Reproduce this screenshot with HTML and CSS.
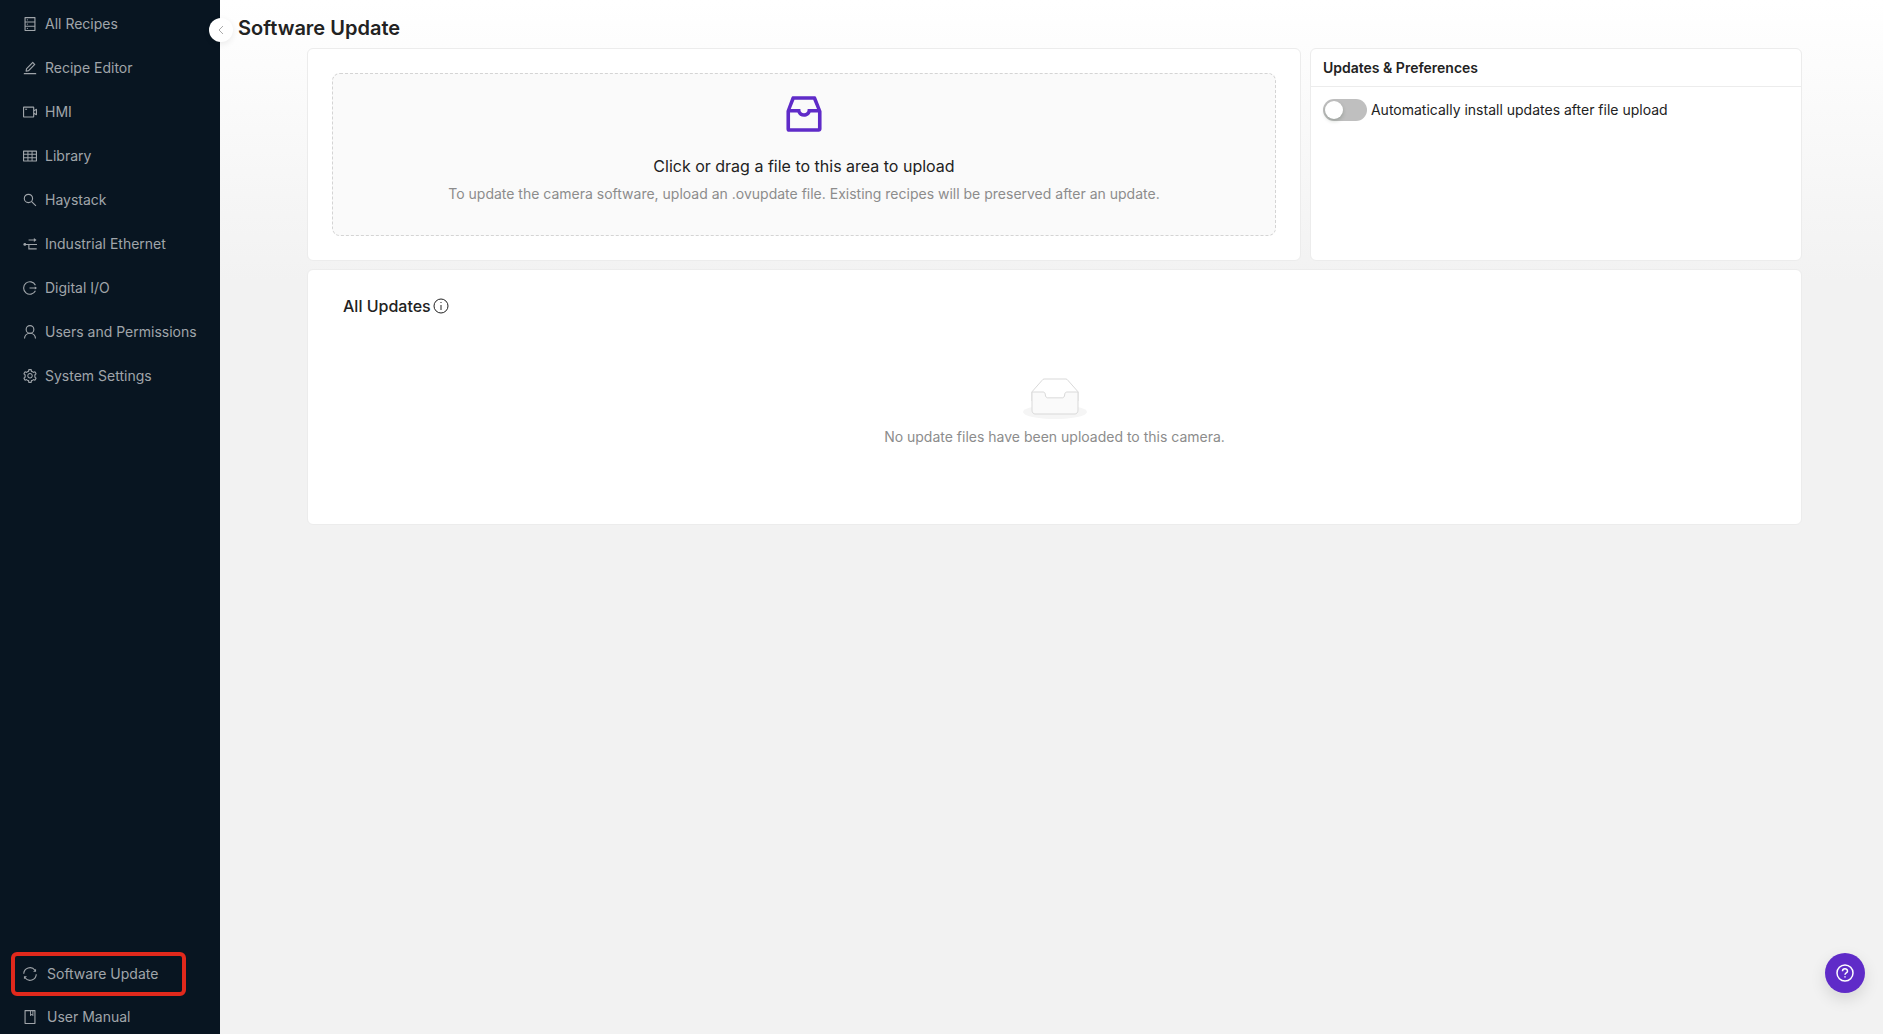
FILE: index.html
```html
<!DOCTYPE html>
<html lang="en">
<head>
<meta charset="utf-8">
<meta name="viewport" content="width=device-width, initial-scale=1">
<title>Software Update</title>
<link rel="stylesheet" href="styles.css">
</head>
<body>
<div class="app">
  <aside class="sidebar">
    <nav class="menu" aria-label="Main">
      <a class="menu-item" href="#recipes"><svg class="icon" viewBox="64 64 896 896"><path d="M832 64H192c-17.700 0-32 14.300-32 32v832c0 17.700 14.300 32 32 32h640c17.700 0 32-14.300 32-32V96c0-17.700-14.300-32-32-32zm-600 72h560v208H232V136zm560 480H232V408h560v208zm0 272H232V680h560v208zM304 240a40 40 0 1080 0 40 40 0 10-80 0zm0 272a40 40 0 1080 0 40 40 0 10-80 0zm0 272a40 40 0 1080 0 40 40 0 10-80 0z"/></svg>All Recipes</a>
      <a class="menu-item" href="#editor"><svg class="icon" viewBox="64 64 896 896"><path d="M257.700 752c2 0 4-.2 6-.5L431.900 722c2-.4 3.900-1.300 5.300-2.800l423.900-423.900a9.960 9.960 0 000-14.100L694.900 114.900c-1.900-1.900-4.400-2.900-7.100-2.900s-5.200 1-7.100 2.900L256.800 538.800c-1.500 1.500-2.400 3.300-2.800 5.300l-29.500 168.200a33.500 33.500 0 009.400 29.800c6.600 6.400 14.900 9.900 23.800 9.900zm67.400-174.400L687.800 215l73.300 73.300-362.700 362.600-88.900 15.700 15.600-89zM880 836H144c-17.700 0-32 14.300-32 32v36c0 4.400 3.600 8 8 8h784c4.400 0 8-3.600 8-8v-36c0-17.700-14.300-32-32-32z"/></svg>Recipe Editor</a>
      <a class="menu-item" href="#hmi"><svg class="icon" viewBox="64 64 896 896"><path d="M912 302.300L784 376V224c0-35.300-28.700-64-64-64H128c-35.300 0-64 28.700-64 64v576c0 35.300 28.700 64 64 64h592c35.300 0 64-28.700 64-64V648l128 73.700c21.300 12.300 48-3.100 48-27.600V330c0-24.600-26.700-40-48-27.700zM712 792H136V232h576v560zm176-167l-104-59.800V458.900L888 399v226zM208 360h112c4.400 0 8-3.600 8-8v-48c0-4.400-3.600-8-8-8H208c-4.400 0-8 3.600-8 8v48c0 4.400 3.600 8 8 8z"/></svg>HMI</a>
      <a class="menu-item" href="#library"><svg class="icon" viewBox="64 64 896 896"><path d="M928 160H96c-17.700 0-32 14.300-32 32v640c0 17.700 14.300 32 32 32h832c17.700 0 32-14.300 32-32V192c0-17.700-14.300-32-32-32zm-40 208H676V232h212v136zm0 224H676V432h212v160zM412 432h200v160H412V432zm200-64H412V232h200v136zm-476 64h212v160H136V432zm0-200h212v136H136V232zm0 424h212v136H136V656zm276 0h200v136H412V656zm476 136H676V656h212v136z"/></svg>Library</a>
      <a class="menu-item" href="#haystack"><svg class="icon line" viewBox="64 64 896 896"><circle cx="412" cy="412" r="264"/><path d="M603 603L892 892"/></svg>Haystack</a>
      <a class="menu-item" href="#ethernet"><svg class="icon line" viewBox="64 64 896 896"><path d="M150 540H960M420 256H830M440 540V820H940"/><path class="solid" d="M760 130L930 256L760 382z"/><circle class="solid" cx="180" cy="540" r="90"/></svg>Industrial Ethernet</a>
      <a class="menu-item" href="#io"><svg class="icon line" viewBox="64 64 896 896"><path d="M860 330A400 400 0 1 0 860 694M480 512H860"/><path class="solid" d="M820 410L960 512L820 614z"/></svg>Digital I/O</a>
      <a class="menu-item" href="#users"><svg class="icon line" viewBox="64 64 896 896"><circle cx="512" cy="346" r="246"/><path d="M160 930C170 760 290 592 512 592S854 760 864 930"/></svg>Users and Permissions</a>
      <a class="menu-item" href="#settings"><svg class="icon" viewBox="64 64 896 896"><path d="M924.800 625.700l-65.500-56c3.100-19 4.700-38.400 4.700-57.800s-1.600-38.800-4.700-57.800l65.500-56a32.030 32.030 0 009.300-35.200l-.9-2.600a443.740 443.740 0 00-79.700-137.900l-1.800-2.100a32.120 32.120 0 00-35.100-9.500l-81.300 28.900c-30-24.600-63.500-44-99.700-57.600l-15.700-85a32.050 32.050 0 00-25.800-25.700l-2.700-.5c-52.100-9.400-106.900-9.400-159 0l-2.700.5a32.050 32.050 0 00-25.800 25.700l-15.800 85.400a351.860 351.860 0 00-99 57.400l-81.900-29.100a32 32 0 00-35.100 9.500l-1.800 2.100a446.020 446.020 0 00-79.700 137.900l-.9 2.600c-4.500 12.500-.8 26.500 9.300 35.200l66.300 56.600c-3.100 18.800-4.600 38-4.600 57.100 0 19.200 1.500 38.400 4.600 57.100L99 625.500a32.030 32.030 0 00-9.300 35.200l.9 2.600c18.100 50.400 44.900 96.900 79.700 137.900l1.800 2.100a32.120 32.120 0 0035.100 9.500l81.900-29.100c29.800 24.500 63.100 43.900 99 57.400l15.800 85.400a32.050 32.050 0 0025.800 25.700l2.700.5a449.400 449.400 0 00159 0l2.700-.5a32.050 32.050 0 0025.800-25.700l15.700-85a350 350 0 0099.700-57.600l81.300 28.900a32 32 0 0035.100-9.500l1.800-2.100c34.800-41.100 61.600-87.500 79.700-137.900l.9-2.600c4.500-12.300.8-26.300-9.300-35zM788.300 465.900c2.500 15.100 3.800 30.600 3.800 46.100s-1.300 31-3.800 46.100l-6.600 40.100 74.700 63.900a370.030 370.030 0 01-42.600 73.600L721 702.800l-31.400 25.800c-23.900 19.600-50.500 35-79.300 45.800l-38.100 14.300-17.900 97a377.500 377.500 0 01-85 0l-17.900-97.200-37.800-14.500c-28.500-10.800-55-26.200-78.700-45.700l-31.400-25.900-93.400 33.200c-17-22.900-31.200-47.600-42.600-73.600l75.500-64.500-6.500-40c-2.400-14.900-3.700-30.300-3.700-45.500 0-15.300 1.200-30.600 3.700-45.500l6.500-40-75.500-64.500c11.300-26.100 25.600-50.700 42.600-73.600l93.400 33.200 31.400-25.900c23.700-19.500 50.200-34.900 78.700-45.700l37.900-14.300 17.900-97.200c28.100-3.200 56.800-3.200 85 0l17.900 97 38.100 14.300c28.700 10.800 55.400 26.200 79.300 45.800l31.400 25.800 92.800-32.900c17 22.900 31.200 47.600 42.600 73.600L781.800 426l6.500 39.900zM512 326c-97.200 0-176 78.800-176 176s78.800 176 176 176 176-78.800 176-176-78.800-176-176-176zm0 64a112 112 0 110 224 112 112 0 010-224z"/></svg>System Settings</a>
    </nav>
    <nav class="menu menu-bottom" aria-label="Support">
      <a class="menu-item highlighted" href="#update" aria-current="page"><svg class="icon line" viewBox="64 64 896 896"><path d="M112 500A400 400 0 0 1 830 270M912 524A400 400 0 0 1 194 754"/><path class="solid" d="M900 180V370H710zM124 844V654H314z"/></svg>Software Update</a>
      <a class="menu-item" href="#manual"><svg class="icon" viewBox="64 64 896 896"><path d="M832 64H192c-17.700 0-32 14.300-32 32v832c0 17.700 14.300 32 32 32h640c17.700 0 32-14.300 32-32V96c0-17.700-14.300-32-32-32zm-260 72h96v209.900L621.500 312 572 347.400V136zm220 752H232V136h280v296.900c0 3.300 1 6.600 3 9.300a15.900 15.900 0 0022.300 3.700l83.800-59.900 81.400 59.400c2.700 2 6 3.100 9.400 3.100 8.800 0 16-7.200 16-16V136h64v752z"/></svg>User Manual</a>
    </nav>
    <button class="collapse" type="button" aria-label="Collapse menu"><svg viewBox="0 0 10 10"><path d="M7 1L3 5L7 9"/></svg></button>
  </aside>

  <main class="main">
    <h1 class="title">Software Update</h1>
    <div class="cards">
      <section class="card upload-card">
        <button class="upload" type="button">
          <svg class="inbox" viewBox="0 0 1024 1024"><path d="M885.200 446.300l-.2-.8-112.200-285.100c-5-16.100-19.900-27.200-36.800-27.200H281.200c-17 0-32.100 11.300-36.900 27.600L139.400 443l-.3.7-.2.8c-1.300 4.900-1.700 9.900-1 14.800-.1 1.600-.2 3.200-.2 4.800V830a60.900 60.900 0 0060.800 60.800h627.200c33.500 0 60.800-27.300 60.900-60.800V464.100c0-1.300 0-2.600-.1-3.700.4-4.900 0-9.600-1.300-14.100zm-295.800-43l-.3 15.700c-.8 44.900-31.800 75.100-77.100 75.100-22.100 0-41.100-7.100-54.800-20.600S436 441.200 435.600 419l-.3-15.700H229.500L309 210h399.200l81.700 193.300H589.400zm-375 76.800h157.300c24.300 57.100 76 90.800 140.400 90.800 33.700 0 65-9.400 90.300-27.200 22.200-15.600 39.500-37.400 50.700-63.600h156.500V814H214.400V480.100z"/></svg>
          <span class="upload-text">Click or drag a file to this area to upload</span>
          <span class="upload-hint">To update the camera software, upload an .ovupdate file. Existing recipes will be preserved after an update.</span>
        </button>
      </section>
      <section class="card">
        <h2 class="card-head">Updates &amp; Preferences</h2>
        <div class="preference">
          <input class="switch" type="checkbox" role="switch" id="auto-install">
          <label for="auto-install">Automatically install updates after file upload</label>
        </div>
      </section>
      <section class="card updates">
        <h2 class="updates-title">All Updates
          <svg class="info" viewBox="0 0 16 16"><circle cx="8" cy="8" r="7"/><path d="M8 7V12M8 4V5"/></svg>
        </h2>
        <div class="empty">
          <svg width="64" height="41" viewBox="0 0 64 41"><g transform="translate(0 1)" fill="none" fill-rule="evenodd"><ellipse fill="#f5f5f5" cx="32" cy="33" rx="32" ry="7"/><g fill-rule="nonzero" stroke="#d9d9d9"><path d="M55 12.760L44.854 1.258C44.367.474 43.656 0 42.907 0H21.093c-.749 0-1.460.474-1.947 1.257L9 12.761V22h46v-9.240z"/><path d="M41.613 15.931c0-1.605.994-2.930 2.227-2.931H55v18.137C55 33.260 53.680 35 52.050 35h-40.100C10.320 35 9 33.259 9 31.137V13h11.160c1.233 0 2.227 1.323 2.227 2.928v.022c0 1.605 1.005 2.901 2.237 2.901h14.752c1.232 0 2.237-1.308 2.237-2.913v-.007z" fill="#fafafa"/></g></g></svg>
          <p>No update files have been uploaded to this camera.</p>
        </div>
      </section>
    </div>
  </main>
  <button class="help" type="button" aria-label="Help"><svg viewBox="0 0 18 18"><circle cx="9" cy="9" r="8"/><path d="M6.500 7.300C6.500 4 11.500 4 11.500 7.200C11.500 9 9 8.800 9 10.700M9 12.300V13.500"/></svg></button>
</div>
</body>
</html>
```
FILE: styles.css
```css
* { box-sizing: border-box; }

body {
  margin: 0;
  color: #222;
  font: 14px/22px Inter, "Liberation Sans", sans-serif;
}

button { font: inherit; color: inherit; cursor: pointer; }

.app { display: flex; min-height: 100vh; }

/* Sidebar */
.sidebar {
  position: sticky;
  top: 0;
  flex: none;
  display: flex;
  flex-direction: column;
  justify-content: space-between;
  width: 220px;
  height: 100vh;
  padding-top: 4px;
  background: #081521;
}

.menu { display: flex; flex-direction: column; gap: 4px; }

.menu-item {
  display: flex;
  align-items: center;
  gap: 8px;
  height: 40px;
  padding-left: 23px;
  color: #a0a5aa;
  text-decoration: none;
}

.menu-bottom { gap: 3px; }
.menu-bottom .menu-item { gap: 10px; }
.menu-bottom .menu-item:last-child { height: 35px; }

.menu-bottom .highlighted {
  width: 175px;
  height: 44px;
  margin-left: 11px;
  padding-left: 8px;
  border: 4px solid #e1291c;
  border-radius: 6px;
}

.icon { flex: none; width: 14px; height: 14px; fill: currentColor; }
.line { fill: none; stroke: currentColor; stroke-width: 72; }
.line .solid { fill: currentColor; stroke: none; }

.collapse {
  position: absolute;
  top: 18px;
  right: -13px;
  display: grid;
  place-items: center;
  width: 24px;
  height: 24px;
  padding: 0;
  border: 0;
  border-radius: 50%;
  background: #fff;
  box-shadow: 0 2px 6px rgba(0, 0, 0, .08);
}

.collapse svg { width: 10px; height: 10px; fill: none; stroke: #aaa; }

/* Content */
.main {
  flex: 1;
  min-width: 0;
  padding: 12px 81px 48px 87px;
  background: linear-gradient(#fff, #f2f2f2 280px);
}

.title {
  margin: 0 0 4px -69px;
  font-size: 20px;
  font-weight: 600;
  line-height: 32px;
}

.cards { display: grid; grid-template-columns: 101fr 50fr; gap: 8px 9px; }

.card {
  border: 1px solid #ececec;
  border-radius: 6px;
  background: #fff;
}

.upload-card { padding: 24px; }

.upload {
  display: flex;
  flex-direction: column;
  align-items: center;
  width: 100%;
  padding: 16px 16px 30px;
  border: 1px dashed #d4d4d4;
  border-radius: 8px;
  background: #fafafa;
}

.inbox { width: 48px; height: 48px; margin-bottom: 16px; fill: #5f2bc8; }
.upload-text { margin-bottom: 5px; font-size: 16px; line-height: 24px; }
.upload-hint { color: #8c8c8c; }

.card-head {
  margin: 0;
  padding: 8px 12px 7px;
  border-bottom: 1px solid #ececec;
  font-size: 14px;
  font-weight: 600;
}

.preference { display: flex; gap: 4px; padding: 12px; }

.switch {
  appearance: none;
  flex: none;
  display: flex;
  align-items: center;
  width: 44px;
  height: 22px;
  margin: 0;
  padding: 2px;
  border-radius: 11px;
  background: #bfbfbf;
}

.switch::before {
  content: "";
  width: 18px;
  height: 18px;
  border-radius: 50%;
  background: #fff;
  box-shadow: 0 2px 4px rgba(0, 35, 11, .2);
}

.switch:checked { justify-content: flex-end; background: #5f2bc8; }

.updates { grid-column: 1 / -1; padding: 24px 35px 76px; }

.updates-title {
  display: flex;
  align-items: center;
  gap: 2px;
  margin: 0 0 60px;
  font-size: 16px;
  font-weight: 500;
  line-height: 24px;
}

.info { width: 16px; height: 16px; fill: none; stroke: currentColor; }

.empty { display: flex; flex-direction: column; align-items: center; gap: 7px; color: #8c8c8c; }
.empty p { margin: 0; }

/* Help bubble */
.help {
  position: fixed;
  right: 18px;
  bottom: 41px;
  display: grid;
  place-items: center;
  width: 40px;
  height: 40px;
  padding: 0;
  border: 0;
  border-radius: 50%;
  background: #5f2bc8;
  box-shadow: 0 6px 16px rgba(0, 0, 0, .12);
}

.help svg { width: 18px; height: 18px; fill: none; stroke: #fff; stroke-width: 1.5; }
```
